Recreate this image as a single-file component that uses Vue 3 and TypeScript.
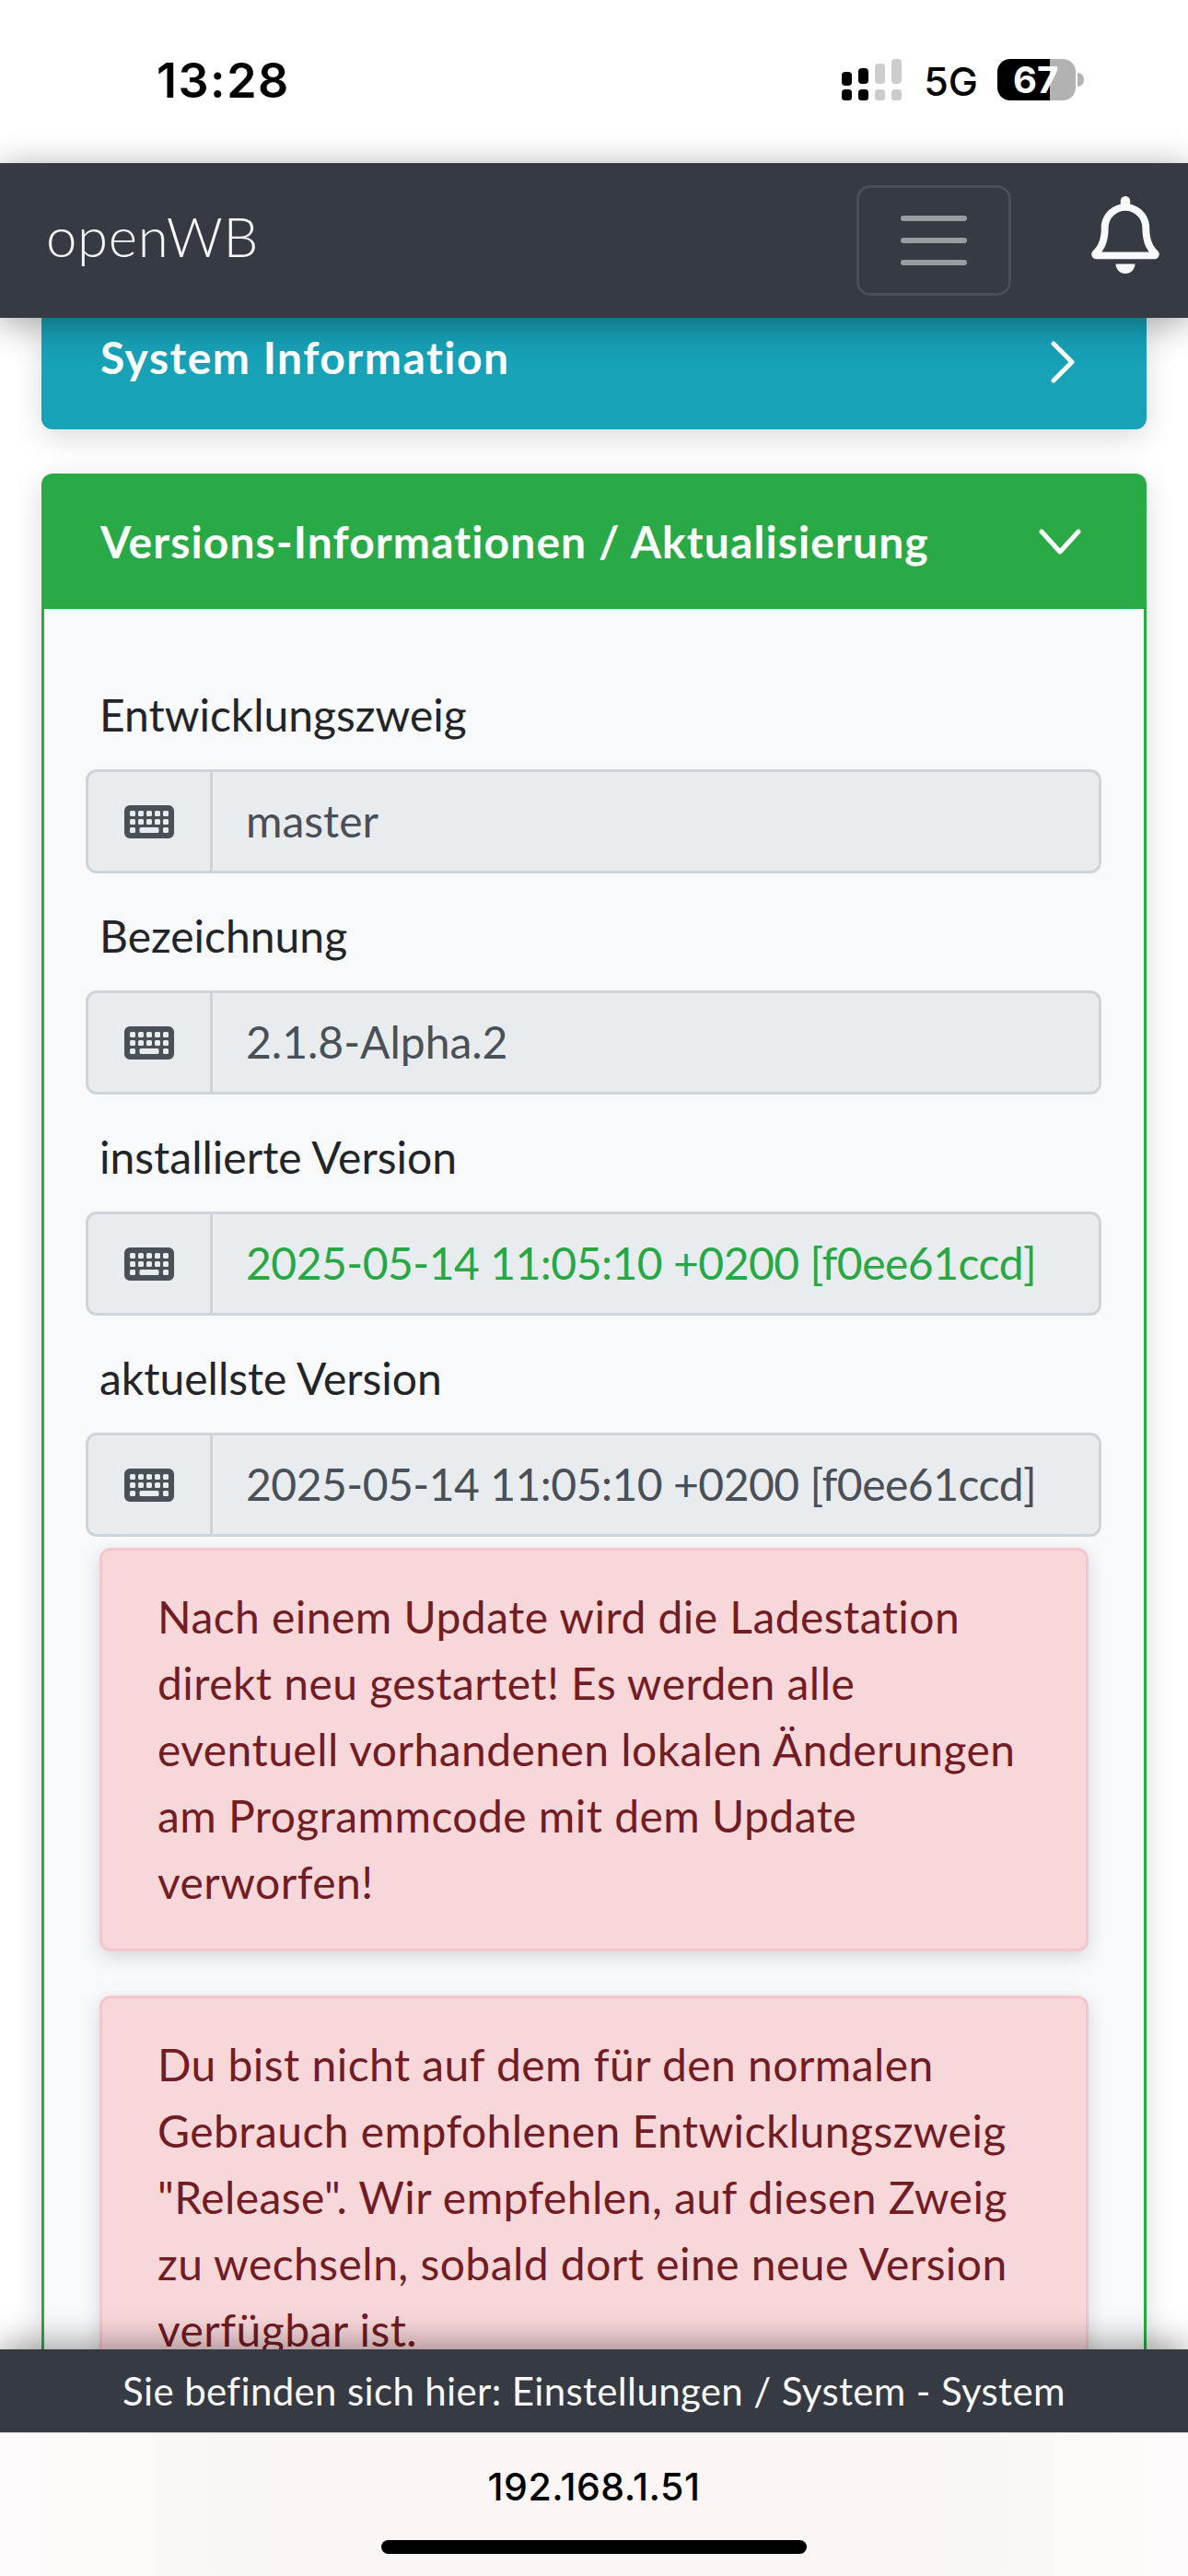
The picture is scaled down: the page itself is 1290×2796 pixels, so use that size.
<script setup lang="ts">
interface Field { label: string; value: string; ok?: boolean; long?: boolean }
const fields: Field[] = [
  { label: 'Entwicklungszweig', value: 'master' },
  { label: 'Bezeichnung', value: '2.1.8-Alpha.2' },
  { label: 'installierte Version', value: '2025-05-14 11:05:10 +0200 [f0ee61ccd]', ok: true, long: true },
  { label: 'aktuellste Version', value: '2025-05-14 11:05:10 +0200 [f0ee61ccd]', long: true },
]
const alerts: string[][] = [
  ['Nach einem Update wird die Ladestation', 'direkt neu gestartet! Es werden alle', 'eventuell vorhandenen lokalen Änderungen', 'am Programmcode mit dem Update', 'verworfen!'],
  ['Du bist nicht auf dem für den normalen', 'Gebrauch empfohlenen Entwicklungszweig', '"Release". Wir empfehlen, auf diesen Zweig', 'zu wechseln, sobald dort eine neue Version', 'verfügbar ist.'],
]
const key = (x: number, y: number, w: number): string =>
  `M${x + 16} ${y}h${w - 32}a16 16 0 0 1 16 16v32a16 16 0 0 1 -16 16h-${w - 32}a16 16 0 0 1 -16 -16v-32a16 16 0 0 1 16 -16z`
const keyboard = 'M64 64H512a64 64 0 0 1 64 64V384a64 64 0 0 1 -64 64H64a64 64 0 0 1 -64 -64V128a64 64 0 0 1 64 -64z'
  + [64, 160, 256, 352, 448].map(x => key(x, 128, 64) + key(x, 224, 64)).join('')
  + key(64, 320, 64) + key(176, 320, 224) + key(448, 320, 64)
</script>

<template>
  <div class="phone">
    <header class="status">
      <span class="time">13:28</span>
      <div class="status-right">
        <svg class="signal" width="65" height="45" viewBox="0 0 65 45">
          <rect x="0" y="14" width="11" height="15" rx="4" fill="#000" />
          <rect x="18" y="10" width="11" height="17" rx="4" fill="#000" />
          <rect x="36" y="5" width="11" height="22" rx="4" fill="#ccc" />
          <rect x="54" y="0" width="11" height="27" rx="4" fill="#ccc" />
          <rect x="0" y="33" width="11" height="12" rx="3.5" fill="#000" />
          <rect x="18" y="33" width="11" height="12" rx="3.5" fill="#000" />
          <rect x="36" y="33" width="11" height="12" rx="3.5" fill="#ccc" />
          <rect x="54" y="33" width="11" height="12" rx="3.5" fill="#ccc" />
        </svg>
        <span class="net">5G</span>
        <div class="battery"><span>67</span></div>
        <i class="nub"></i>
      </div>
    </header>

    <nav class="navbar">
      <span class="brand">openWB</span>
      <div class="nav-right">
        <div class="toggler"><i></i><i></i><i></i></div>
        <svg class="bell" viewBox="0 0 448 512" width="74" height="84">
          <path fill="#f8f9fa" d="M439.39 362.29c-19.32-20.76-55.47-51.99-55.47-154.29 0-77.7-54.48-139.9-127.94-155.16V32c0-17.67-14.32-32-31.98-32s-31.98 14.33-31.98 32v20.84C118.56 68.1 64.08 130.3 64.08 208c0 102.3-36.15 133.53-55.47 154.29-6 6.45-8.66 14.16-8.61 21.71.11 16.4 12.98 32 32.1 32h383.8c19.12 0 32-15.6 32.1-32 .05-7.55-2.61-15.27-8.61-21.71zM67.53 368c21.22-27.97 44.42-74.33 44.53-159.42 0-.2-.06-.38-.06-.58 0-61.86 50.14-112 112-112s112 50.14 112 112c0 .2-.06.38-.06.58.11 85.1 23.31 131.46 44.53 159.42H67.53zM224 512c35.32 0 63.97-28.65 63.97-64H160.03c0 35.35 28.65 64 63.97 64z" />
        </svg>
      </div>
    </nav>

    <main class="content">
      <section class="card-blue">
        <span class="title">System Information</span>
        <svg class="chev-right" width="30" height="46" viewBox="0 0 30 46"><path d="M5 3 L25 23 L5 43" fill="none" stroke="#fff" stroke-width="5" stroke-linecap="round" stroke-linejoin="round" /></svg>
      </section>

      <section class="card-green">
        <div class="green-head">
          <span class="title">Versions-Informationen / Aktualisierung</span>
          <svg width="46" height="28" viewBox="0 0 46 28"><path d="M3 3 L23 25 L43 3" fill="none" stroke="#fff" stroke-width="5" stroke-linecap="round" stroke-linejoin="round" /></svg>
        </div>
        <div class="green-body">
          <div v-for="f in fields" :key="f.label" class="field">
            <label class="label">{{ f.label }}</label>
            <div class="input-group">
              <div class="addon">
                <svg width="54" height="48" viewBox="0 0 576 512"><path fill="#495057" fill-rule="evenodd" :d="keyboard" /></svg>
              </div>
              <div class="value" :class="{ ok: f.ok, long: f.long }">{{ f.value }}</div>
            </div>
          </div>
          <div class="alerts">
            <div v-for="(a, i) in alerts" :key="i" class="alert">
              <div v-for="line in a" :key="line">{{ line }}</div>
            </div>
          </div>
        </div>
      </section>
    </main>

    <footer class="where">Sie befinden sich hier: Einstellungen / System - System</footer>
    <div class="urlbar">
      <span class="url">192.168.1.51</span>
      <i class="home"></i>
    </div>
  </div>
</template>

<style>
html, body { margin: 0; padding: 0; background: #fff; }
</style>

<style scoped>
.phone {
  width: 1290px;
  height: 2796px;
  display: flex;
  flex-direction: column;
  overflow: hidden;
  font-family: Lato, "Open Sans", sans-serif;
  font-variant-ligatures: none;
  background: #fff;
}
.status {
  height: 177px;
  flex: none;
  display: flex;
  justify-content: space-between;
  align-items: flex-start;
  box-sizing: border-box;
  padding: 0 113px 0 170px;
  background: #fff;
}
.time {
  font-family: Inter, sans-serif;
  font-weight: 600;
  font-size: 52px;
  letter-spacing: 1.5px;
  line-height: 62px;
  margin-top: 57px;
  color: #000;
}
.status-right {
  display: flex;
  align-items: flex-start;
  margin-top: 64px;
}
.signal { display: block; }
.net {
  font-family: Inter, sans-serif;
  font-weight: 500;
  font-size: 43px;
  line-height: 45px;
  margin: 2px 0 0 24px;
  color: #000;
}
.battery {
  width: 85px;
  height: 45px;
  margin-left: 21px;
  border-radius: 14px;
  background: linear-gradient(90deg, #000 0, #000 57px, #b2b2b2 57px, #b2b2b2 100%);
  box-sizing: border-box;
  padding-left: 17px;
}
.battery span {
  font-family: Inter, sans-serif;
  font-weight: 700;
  font-size: 40px;
  line-height: 45px;
  color: #fff;
  display: block;
}
.nub {
  display: block;
  width: 7px;
  height: 15px;
  margin: 15px 0 0 2px;
  background: #b2b2b2;
  border-radius: 0 7px 7px 0;
}

.navbar {
  height: 168px;
  flex: none;
  display: flex;
  justify-content: space-between;
  align-items: center;
  box-sizing: border-box;
  padding: 0 31px 0 50px;
  background: #363a42;
  position: relative;
  z-index: 2;
  box-shadow: 0 6px 36px rgba(0, 0, 0, .38);
}
.brand {
  font-size: 60px;
  font-weight: 300;
  letter-spacing: .6px;
  line-height: 72px;
  margin-bottom: 10px;
  color: #f8f9fa;
}
.nav-right {
  display: flex;
  align-items: center;
  gap: 87px;
}
.toggler {
  width: 168px;
  height: 120px;
  box-sizing: border-box;
  border: 3px solid rgba(255, 255, 255, .1);
  border-radius: 15px;
  display: flex;
  flex-direction: column;
  align-items: center;
  justify-content: center;
  gap: 18px;
}
.toggler i {
  display: block;
  width: 72px;
  height: 6px;
  border-radius: 3px;
  background: #9a9da0;
}
.bell { display: block; margin-top: -13px; }

.content {
  flex: 1;
  min-height: 0;
  overflow: hidden;
  box-sizing: border-box;
  padding: 0 45px;
  background: #fff;
}
.title {
  font-weight: 700;
  font-size: 48px;
  letter-spacing: 1.1px;
  line-height: 60px;
  color: #fff;
}
.card-blue {
  height: 121px;
  box-sizing: border-box;
  padding: 14px 76px 49px 64px;
  background: #17a2b8;
  border-radius: 0 0 12px 12px;
  display: flex;
  justify-content: space-between;
  align-items: center;
  box-shadow: 0 8px 32px rgba(0, 0, 0, .15);
}
.card-blue .title { letter-spacing: 1.5px; }
.chev-right { margin-top: 10px; }
.card-green {
  margin-top: 48px;
  border-radius: 12px;
  box-shadow: 0 8px 32px rgba(0, 0, 0, .15);
}
.green-head {
  height: 147px;
  box-sizing: border-box;
  padding: 0 71px 0 64px;
  background: #2aaa47;
  border-radius: 12px 12px 0 0;
  display: flex;
  justify-content: space-between;
  align-items: center;
}
.green-body {
  border: solid #2aaa47;
  border-width: 0 3px;
  background: #f8f9fa;
  padding: 47px 60px 0;
}
.field { margin-top: 32px; }
.label {
  display: block;
  font-size: 48px;
  line-height: 72px;
  color: #212529;
}
.input-group {
  margin: 23px -14px 0 -15px;
  height: 113px;
  box-sizing: border-box;
  border: 3px solid #ced4da;
  border-radius: 12px;
  background: #e9ecef;
  display: flex;
  align-items: stretch;
}
.addon {
  width: 135px;
  flex: none;
  box-sizing: border-box;
  border-right: 3px solid #ced4da;
  display: flex;
  align-items: center;
  justify-content: center;
}
.value {
  padding-left: 36px;
  font-size: 48px;
  line-height: 105px;
  color: #495057;
  white-space: nowrap;
}
.value.long { letter-spacing: -.5px; }
.value.ok { color: #28a745; }
.alerts { margin-top: 12px; }
.alert {
  box-sizing: border-box;
  border: 3px solid #f5c6cb;
  border-radius: 12px;
  background: #f8d7da;
  color: #721c24;
  padding: 36px 60px;
  margin-bottom: 48px;
  font-size: 48px;
  letter-spacing: .45px;
  line-height: 72px;
  white-space: nowrap;
  box-shadow: 0 6px 20px rgba(0, 0, 0, .14);
}

.where {
  height: 90px;
  flex: none;
  background: #363a42;
  color: #f8f9fa;
  font-size: 42px;
  letter-spacing: .36px;
  line-height: 90px;
  text-align: center;
  position: relative;
  z-index: 2;
  box-shadow: 0 -6px 36px rgba(0, 0, 0, .38);
}
.urlbar {
  height: 156px;
  flex: none;
  box-sizing: border-box;
  border-top: 1px solid #d5d5d5;
  background: linear-gradient(90deg, #fdfbfb 0, #fbf5f5 25%, #fbf5f5 78%, #fdfbfb 100%);
  display: flex;
  flex-direction: column;
  align-items: center;
  position: relative;
  z-index: 3;
}
.url {
  margin-top: 28px;
  font-family: Inter, sans-serif;
  font-weight: 500;
  font-size: 41px;
  letter-spacing: .5px;
  line-height: 60px;
  color: #000;
}
.home {
  display: block;
  margin-top: 28px;
  width: 462px;
  height: 15px;
  border-radius: 8px;
  background: #000;
}
</style>
